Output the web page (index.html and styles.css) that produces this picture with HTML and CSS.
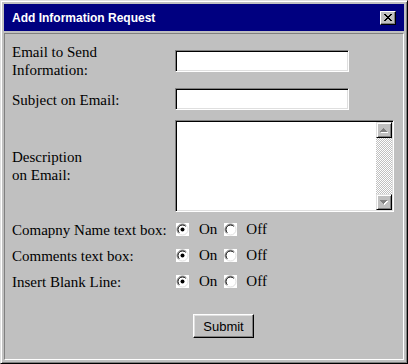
FILE: index.html
```html
<!DOCTYPE html>
<html>
<head>
<meta charset="utf-8">
<link rel="stylesheet" href="styles.css">
</head>
<body>
<div class="window">
  <div class="titlebar">
    <span class="title">Add Information Request</span>
    <span class="close">
      <svg width="8" height="7" viewBox="0 0 8 7" shape-rendering="crispEdges">
        <path fill="#000" d="M0 0h2v1H0zM6 0h2v1H6zM1 1h2v1H1zM5 1h2v1H5zM2 2h4v1H2zM3 3h2v1H3zM2 4h4v1H2zM1 5h2v1H1zM5 5h2v1H5zM0 6h2v1H0zM6 6h2v1H6z"/>
      </svg>
    </span>
  </div>
  <div class="panel">
    <div class="form">
      <div class="lbl">Email to Send<br>Information:</div>
      <div class="field"><input class="input" type="text"></div>

      <div class="lbl">Subject on Email:</div>
      <div class="field field-top"><input class="input" type="text"></div>

      <div class="lbl">Description<br>on Email:</div>
      <div class="field">
        <div class="ta-wrap">
          <textarea class="ta"></textarea>
          <div class="scrollbar">
            <div class="sbtn">
              <svg width="8" height="5" viewBox="0 0 8 5" shape-rendering="crispEdges">
                <path fill="#fff" d="M4 1h1v1H4zM3 2h3v1H3zM2 3h5v1H2zM1 4h7v1H1z"/>
                <path fill="#808080" d="M3 0h1v1H3zM2 1h3v1H2zM1 2h5v1H1zM0 3h7v1H0z"/>
              </svg>
            </div>
            <div class="track"></div>
            <div class="sbtn">
              <svg width="8" height="5" viewBox="0 0 8 5" shape-rendering="crispEdges">
                <path fill="#fff" d="M1 1h7v1H1zM2 2h5v1H2zM3 3h3v1H3zM4 4h1v1H4z"/>
                <path fill="#808080" d="M0 0h7v1H0zM1 1h5v1H1zM2 2h3v1H2zM3 3h1v1H3z"/>
              </svg>
            </div>
          </div>
        </div>
      </div>

      <div class="lbl">Comapny Name text box:</div>
      <div class="radios">
        <svg class="radio" width="13" height="13" viewBox="0 0 13 13"><rect width="13" height="13" fill="#fff"/><path d="M10.4 2.6A5.5 5.5 0 0 0 2.6 10.4" stroke="#808080" fill="none"/><path d="M9.7 3.3A4.5 4.5 0 0 0 3.3 9.7" stroke="#000" fill="none"/><path d="M2.6 10.4A5.5 5.5 0 0 0 10.4 2.6" stroke="#dfdfdf" fill="none"/><circle cx="6.5" cy="6.5" r="2" fill="#000"/></svg>
        <span class="opt">On</span>
        <svg class="radio r2" width="13" height="13" viewBox="0 0 13 13"><rect width="13" height="13" fill="#fff"/><path d="M10.4 2.6A5.5 5.5 0 0 0 2.6 10.4" stroke="#808080" fill="none"/><path d="M9.7 3.3A4.5 4.5 0 0 0 3.3 9.7" stroke="#000" fill="none"/><path d="M2.6 10.4A5.5 5.5 0 0 0 10.4 2.6" stroke="#dfdfdf" fill="none"/></svg>
        <span class="opt off">Off</span>
      </div>

      <div class="lbl">Comments text box:</div>
      <div class="radios">
        <svg class="radio" width="13" height="13" viewBox="0 0 13 13"><rect width="13" height="13" fill="#fff"/><path d="M10.4 2.6A5.5 5.5 0 0 0 2.6 10.4" stroke="#808080" fill="none"/><path d="M9.7 3.3A4.5 4.5 0 0 0 3.3 9.7" stroke="#000" fill="none"/><path d="M2.6 10.4A5.5 5.5 0 0 0 10.4 2.6" stroke="#dfdfdf" fill="none"/><circle cx="6.5" cy="6.5" r="2" fill="#000"/></svg>
        <span class="opt">On</span>
        <svg class="radio r2" width="13" height="13" viewBox="0 0 13 13"><rect width="13" height="13" fill="#fff"/><path d="M10.4 2.6A5.5 5.5 0 0 0 2.6 10.4" stroke="#808080" fill="none"/><path d="M9.7 3.3A4.5 4.5 0 0 0 3.3 9.7" stroke="#000" fill="none"/><path d="M2.6 10.4A5.5 5.5 0 0 0 10.4 2.6" stroke="#dfdfdf" fill="none"/></svg>
        <span class="opt off">Off</span>
      </div>

      <div class="lbl">Insert Blank Line:</div>
      <div class="radios">
        <svg class="radio" width="13" height="13" viewBox="0 0 13 13"><rect width="13" height="13" fill="#fff"/><path d="M10.4 2.6A5.5 5.5 0 0 0 2.6 10.4" stroke="#808080" fill="none"/><path d="M9.7 3.3A4.5 4.5 0 0 0 3.3 9.7" stroke="#000" fill="none"/><path d="M2.6 10.4A5.5 5.5 0 0 0 10.4 2.6" stroke="#dfdfdf" fill="none"/><circle cx="6.5" cy="6.5" r="2" fill="#000"/></svg>
        <span class="opt">On</span>
        <svg class="radio r2" width="13" height="13" viewBox="0 0 13 13"><rect width="13" height="13" fill="#fff"/><path d="M10.4 2.6A5.5 5.5 0 0 0 2.6 10.4" stroke="#808080" fill="none"/><path d="M9.7 3.3A4.5 4.5 0 0 0 3.3 9.7" stroke="#000" fill="none"/><path d="M2.6 10.4A5.5 5.5 0 0 0 10.4 2.6" stroke="#dfdfdf" fill="none"/></svg>
        <span class="opt off">Off</span>
      </div>
    </div>
    <div class="actions"><button class="submit" type="button">Submit</button></div>
  </div>
</div>
</body>
</html>
```
FILE: styles.css
```css
html, body {
  margin: 0;
  padding: 0;
  background: #c0c0c0;
}

.window {
  box-sizing: border-box;
  width: 408px;
  height: 364px;
  background: #c0c0c0;
  border: 1px solid;
  border-color: #dfdfdf #000 #000 #dfdfdf;
  box-shadow: inset 1px 1px #fff, inset -1px -1px #808080;
  padding: 3px;
  display: flex;
  flex-direction: column;
  gap: 2px;
}

.titlebar {
  height: 27px;
  flex: none;
  background: #000080;
  display: flex;
  align-items: center;
  padding: 0 8px;
}

.title {
  color: #fff;
  font-family: "Liberation Sans", Arial, sans-serif;
  font-weight: bold;
  font-size: 12px;
  line-height: 14px;
}

.close {
  margin-left: auto;
  box-sizing: border-box;
  width: 16px;
  height: 14px;
  background: #c0c0c0;
  border: 1px solid;
  border-color: #fff #000 #000 #fff;
  box-shadow: inset -1px -1px #808080;
  display: flex;
  align-items: center;
  justify-content: center;
  padding: 0 1px 1px 0;
}

.close svg { display: block; }

.panel {
  flex: 1;
  box-sizing: border-box;
  border: 1px solid;
  border-color: #808080 #fff #fff #808080;
  padding: 9px 0 0 7px;
}

.form {
  display: grid;
  grid-template-columns: 163px 1fr;
  grid-template-rows: 36px 23px 92px 17px 17px 17px;
  row-gap: 9px;
  align-items: center;
}

.lbl {
  font-family: "Liberation Serif", "Times New Roman", serif;
  font-size: 15px;
  line-height: 18px;
  color: #000;
  white-space: nowrap;
}

.field { display: flex; }
.field-top { align-self: start; }

.input {
  box-sizing: border-box;
  width: 174px;
  height: 22px;
  margin: 0;
  padding: 0 3px;
  background: #fff;
  border: 1px solid;
  border-color: #808080 #fff #fff #808080;
  box-shadow: inset 1px 1px #000, inset -1px -1px #dfdfdf;
  outline: none;
}

.ta-wrap {
  box-sizing: border-box;
  width: 219px;
  height: 92px;
  background: #fff;
  border: 1px solid;
  border-color: #808080 #fff #fff #808080;
  box-shadow: inset 1px 1px #000, inset -1px -1px #dfdfdf;
  padding: 1px;
  display: flex;
}

.ta {
  flex: 1;
  border: none;
  margin: 0;
  padding: 2px;
  resize: none;
  background: transparent;
  outline: none;
}

.scrollbar {
  width: 16px;
  display: flex;
  flex-direction: column;
}

.sbtn {
  box-sizing: border-box;
  height: 16px;
  background: #c0c0c0;
  border: 1px solid;
  border-color: #dfdfdf #000 #000 #dfdfdf;
  box-shadow: inset 1px 1px #fff, inset -1px -1px #808080;
  display: flex;
  align-items: center;
  justify-content: center;
}

.sbtn svg { display: block; }

.track {
  flex: 1;
  background: repeating-conic-gradient(#c0c0c0 0 25%, #fff 0 50%) 0 0 / 2px 2px;
}

.radios {
  display: flex;
  align-items: center;
  font-family: "Liberation Serif", "Times New Roman", serif;
  font-size: 15px;
  line-height: 17px;
  color: #000;
  padding-left: 1px;
}

.radio { display: block; flex: none; }
.opt { margin-left: 10px; }
.radio.r2 { margin-left: 7px; }
.opt.off { margin-left: 9px; }

.actions {
  margin-top: 24px;
  padding-left: 181px;
  display: flex;
}

.submit {
  box-sizing: border-box;
  width: 61px;
  height: 24px;
  margin: 0;
  padding: 0;
  background: #c0c0c0;
  border: 1px solid;
  border-color: #fff #000 #000 #fff;
  box-shadow: inset -1px -1px #808080, inset 1px 1px #dfdfdf;
  font-family: "Liberation Sans", Arial, sans-serif;
  font-size: 13px;
  color: #000;
}
```
